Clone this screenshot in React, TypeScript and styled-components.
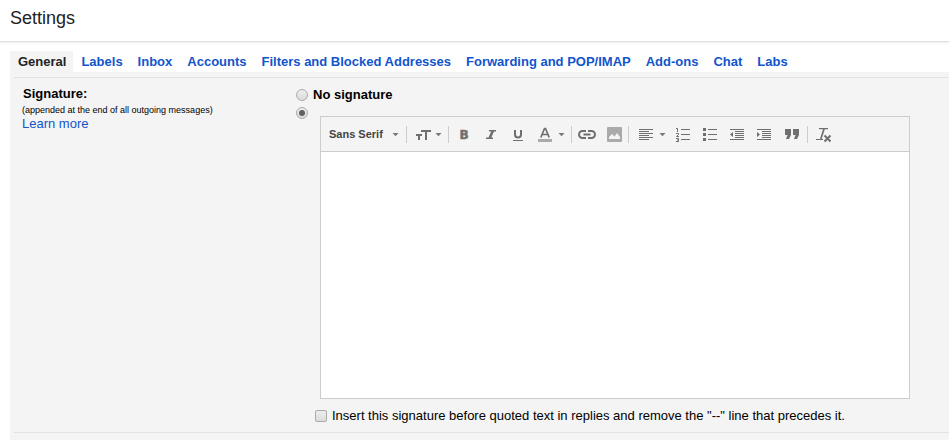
import React, { useState } from "react";
import styled, { createGlobalStyle, css } from "styled-components";

const GlobalStyle = createGlobalStyle`
  *, *::before, *::after { box-sizing: border-box; }
  body {
    margin: 0;
    background: #fff;
    color: #000;
    font: 13px/16px "Liberation Sans", Arial, sans-serif;
  }
`;

const Page = styled.div`
  display: flex;
  flex-direction: column;
  min-height: 100vh;
`;

const Header = styled.header`
  padding: 6px 10px 11px;
  border-bottom: 1px solid #e0e0e0;
  box-shadow: 0 1px 2px rgba(0, 0, 0, 0.08);
`;

const Title = styled.h1`
  margin: 0;
  color: #222;
  font-size: 18px;
  font-weight: 400;
  line-height: 24px;
`;

const Tabs = styled.nav`
  display: flex;
  margin: 9px 0 0 10px;
`;

const Tab = styled.a<{ $active?: boolean }>`
  padding: 3px 7px 2px 8px;
  color: ${(p) => (p.$active ? "#222" : "#15c")};
  background: ${(p) => (p.$active ? "#f4f4f4" : "transparent")};
  font-weight: 700;
  text-decoration: none;
  white-space: nowrap;
`;

const Panel = styled.main`
  flex: 1;
  margin-left: 10px;
  padding: 5px 0 7px 4px;
  background: #f4f4f4;
`;

const Setting = styled.section`
  display: grid;
  grid-template-columns: 274px minmax(0, 1fr);
  padding: 8px 39px 8px 8px;
  border-top: 1px solid #e2e2e2;
  border-bottom: 1px solid #e2e2e2;
`;

const SettingName = styled.h2`
  margin: 0;
  padding-left: 1px;
  font-size: 13px;
  line-height: 16px;
`;

const Hint = styled.p`
  margin: 0;
  font-size: 9px;
  line-height: 16px;
`;

const HelpLink = styled.a`
  display: block;
  color: #15c;
  line-height: 12px;
  text-decoration: none;
`;

const Choices = styled.div`
  display: flex;
  flex-direction: column;
`;

const Choice = styled.label`
  display: flex;
  align-items: center;
  gap: 5px;
  height: 18px;
  font-weight: 700;
`;

const control = css`
  appearance: none;
  flex: none;
  display: grid;
  place-items: center;
  width: 12px;
  height: 12px;
  margin: 0;
  border: 1px solid #aaa;
  background: linear-gradient(#ededed, #dcdcdc);
`;

const Radio = styled.input`
  ${control}
  border-radius: 50%;
  &:checked::before {
    content: "";
    width: 6px;
    height: 6px;
    border-radius: 50%;
    background: #606060;
  }
`;

const Checkbox = styled.input`
  ${control}
  border-radius: 2px;
  &:checked::before {
    content: "";
    width: 6px;
    height: 6px;
    background: #606060;
  }
`;

const EditorChoice = styled.div`
  display: flex;
  gap: 7px;
  padding-top: 3px;
`;

const EditorColumn = styled.div`
  flex: 1;
  min-width: 0;
  padding-top: 9px;
`;

const Editor = styled.div`
  display: flex;
  flex-direction: column;
  margin-left: 5px;
  border: 1px solid #ccc;
`;

const Toolbar = styled.div`
  display: flex;
  align-items: center;
  height: 35px;
  border-bottom: 1px solid #ccc;
`;

const Separator = styled.span`
  flex: none;
  width: 1px;
  height: 17px;
  margin: 0 1px;
  background: #ccc;
`;

const FontPicker = styled.div`
  display: flex;
  align-items: center;
  width: 84px;
  padding: 0 7px 0 8px;
`;

const FontSelect = styled.select`
  appearance: none;
  flex: 1;
  min-width: 0;
  padding: 0;
  border: 0;
  background: transparent;
  color: #444;
  font: 700 11px/16px "Liberation Sans", Arial, sans-serif;
`;

const ToolButton = styled.button<{ $menu?: boolean }>`
  flex: none;
  display: flex;
  align-items: center;
  gap: 5px;
  width: ${(p) => (p.$menu ? "auto" : "27px")};
  height: 27px;
  padding: ${(p) => (p.$menu ? "0 6px 0 5px" : "0 0 0 5px")};
  border: 0;
  background: transparent;
  color: #6f6f6f;
`;

const IconBox = styled.svg`
  flex: none;
  display: block;
  overflow: visible;
`;

const SignatureText = styled.textarea`
  display: block;
  width: 100%;
  height: 246px;
  padding: 8px;
  border: 0;
  outline: 0;
  resize: none;
  background: #fff;
  font: inherit;
`;

const InsertOption = styled.label`
  display: flex;
  align-items: center;
  gap: 5px;
  margin-top: 9px;
`;

const Icon = ({ width = 18, children }: { width?: number; children: React.ReactNode }) => (
  <IconBox width={width} height="16" viewBox={`0 0 ${width} 16`} fill="currentColor" aria-hidden="true">
    {children}
  </IconBox>
);

const Arrow = () => (
  <IconBox width="5" height="3" viewBox="0 0 5 3" fill="#777" aria-hidden="true">
    <path d="M-.5 0h6L2.500 3.200z" />
  </IconBox>
);

const letter = { fontFamily: "DejaVu Sans, sans-serif", textAnchor: "middle" as const };

const SizeIcon = () => (
  <Icon>
    <path d="M8 4h10v2h-4v8h-2V6H8zM3 8h6v2H7v4H5v-4H3z" />
  </Icon>
);
const BoldIcon = () => (
  <Icon>
    <text x="9" y="13" fontSize="12" fontWeight="700" stroke="currentColor" strokeWidth="0.500" {...letter}>B</text>
  </Icon>
);
const ItalicIcon = () => (
  <Icon>
    <path d="M7 4h7v1.500h-2L9.300 11.500H11V13H4v-1.500h2.500L9.200 5.500H7z" />
  </Icon>
);
const UnderlineIcon = () => (
  <Icon>
    <path d="M6 4v4.500a3 3 0 0 0 6 0V4" fill="none" stroke="currentColor" strokeWidth="2" />
    <path d="M4 14h10v1H4z" />
  </Icon>
);
const ColorIcon = () => (
  <Icon>
    <path d="M4.800 11.500 8.500 2.500h1L13.200 11.500M6.300 8.500h5.400" fill="none" stroke="currentColor" strokeWidth="1.700" />
    <path d="M2 13h14v3H2z" fill="#aaa" />
  </Icon>
);
const LinkIcon = () => (
  <Icon>
    <path d="M8 5H4.500a3.500 3.500 0 0 0 0 7H8M10 5h3.500a3.500 3.500 0 0 1 0 7H10M5.500 8.500h7" fill="none" stroke="currentColor" strokeWidth="2" />
  </Icon>
);
const ImageIcon = () => (
  <Icon>
    <path d="M3 1h13a1 1 0 0 1 1 1v13a1 1 0 0 1-1 1H3a1 1 0 0 1-1-1V2a1 1 0 0 1 1-1z" fill="#aaa" />
    <path d="M4 13V11l3-3 2.500 2.500L12 7l3 4v2z" fill="#f4f4f4" />
  </Icon>
);
const AlignIcon = () => (
  <Icon width={20}>
    <path d="M4 3h14v1H4zM4 5h10v1H4zM4 7h14v1H4zM4 9h10v1H4zM4 11h14v1H4zM4 13h10v1H4z" />
  </Icon>
);
const NumberedIcon = () => (
  <Icon>
    <path d="M5 3h9v1H5zM5 8h9v1H5zM5 13h9v1H5z" />
    <path d="M0 2.500h1.500V6M0 7.500h2.500v1L.5 10.500H3M0 12.500h2.500v3H0M1 14h1.500" fill="none" stroke="currentColor" />
  </Icon>
);
const BulletIcon = () => (
  <Icon>
    <path d="M5 3h9v1H5zM5 8h9v1H5zM5 13h9v1H5zM0 2h3v3H0zM0 7h3v3H0zM0 12h3v3H0z" />
  </Icon>
);
const OutdentIcon = () => (
  <Icon>
    <path d="M0 3h14v1H0zM5 5h9v1H5zM5 7h9v1H5zM5 9h9v1H5zM5 11h9v1H5zM0 13h14v1H0zM3 6v5L0 8.500z" />
  </Icon>
);
const IndentIcon = () => (
  <Icon>
    <path d="M0 3h14v1H0zM5 5h9v1H5zM5 7h9v1H5zM5 9h9v1H5zM5 11h9v1H5zM0 13h14v1H0zM0 6v5l3-2.500z" />
  </Icon>
);
const QuoteIcon = () => (
  <Icon>
    <path d="M1 3h6v6l-2 4H2l1.500-4H1zM9 3h6v6l-2 4h-3l1.500-4H9z" />
  </Icon>
);
const ClearIcon = () => (
  <Icon>
    <path d="M5 2h9v1.200H5zM2 13h7v1H2z" />
    <path d="M10 3 6.800 13" stroke="currentColor" strokeWidth="1.700" />
    <path d="m10.500 9.500 6 6M16.500 9.500l-6 6" stroke="currentColor" strokeWidth="2" />
  </Icon>
);

const tabs = [
  "General",
  "Labels",
  "Inbox",
  "Accounts",
  "Filters and Blocked Addresses",
  "Forwarding and POP/IMAP",
  "Add-ons",
  "Chat",
  "Labs",
];

type Tool = { label: string; icon: React.ReactNode; menu?: boolean };

const toolGroups: Tool[][] = [
  [{ label: "Size", icon: <SizeIcon />, menu: true }],
  [
    { label: "Bold", icon: <BoldIcon /> },
    { label: "Italic", icon: <ItalicIcon /> },
    { label: "Underline", icon: <UnderlineIcon /> },
    { label: "Text color", icon: <ColorIcon />, menu: true },
  ],
  [
    { label: "Link", icon: <LinkIcon /> },
    { label: "Insert image", icon: <ImageIcon /> },
  ],
  [
    { label: "Align", icon: <AlignIcon />, menu: true },
    { label: "Numbered list", icon: <NumberedIcon /> },
    { label: "Bulleted list", icon: <BulletIcon /> },
    { label: "Indent less", icon: <OutdentIcon /> },
    { label: "Indent more", icon: <IndentIcon /> },
    { label: "Quote", icon: <QuoteIcon /> },
  ],
  [{ label: "Remove formatting", icon: <ClearIcon /> }],
];

export default function App() {
  const [useSignature, setUseSignature] = useState(true);

  return (
    <Page>
      <GlobalStyle />
      <Header>
        <Title>Settings</Title>
      </Header>
      <Tabs>
        {tabs.map((tab, i) => (
          <Tab key={tab} href="#" $active={i === 0} aria-current={i === 0 ? "page" : undefined}>
            {tab}
          </Tab>
        ))}
      </Tabs>
      <Panel>
        <Setting>
          <div>
            <SettingName>Signature:</SettingName>
            <Hint>(appended at the end of all outgoing messages)</Hint>
            <HelpLink href="#">Learn more</HelpLink>
          </div>
          <Choices>
            <Choice>
              <Radio type="radio" name="signature" checked={!useSignature} onChange={() => setUseSignature(false)} />
              No signature
            </Choice>
            <EditorChoice>
              <Radio
                type="radio"
                name="signature"
                aria-label="Use this signature"
                checked={useSignature}
                onChange={() => setUseSignature(true)}
              />
              <EditorColumn>
                <Editor>
                  <Toolbar role="toolbar" aria-label="Formatting">
                    <FontPicker>
                      <FontSelect aria-label="Font">
                        <option>Sans Serif</option>
                      </FontSelect>
                      <Arrow />
                    </FontPicker>
                    {toolGroups.map((group) => (
                      <React.Fragment key={group[0].label}>
                        <Separator />
                        {group.map((tool) => (
                          <ToolButton key={tool.label} type="button" aria-label={tool.label} $menu={tool.menu}>
                            {tool.icon}
                            {tool.menu && <Arrow />}
                          </ToolButton>
                        ))}
                      </React.Fragment>
                    ))}
                  </Toolbar>
                  <SignatureText aria-label="Signature" />
                </Editor>
                <InsertOption>
                  <Checkbox type="checkbox" />
                  Insert this signature before quoted text in replies and remove the "--" line that precedes it.
                </InsertOption>
              </EditorColumn>
            </EditorChoice>
          </Choices>
        </Setting>
      </Panel>
    </Page>
  );
}
